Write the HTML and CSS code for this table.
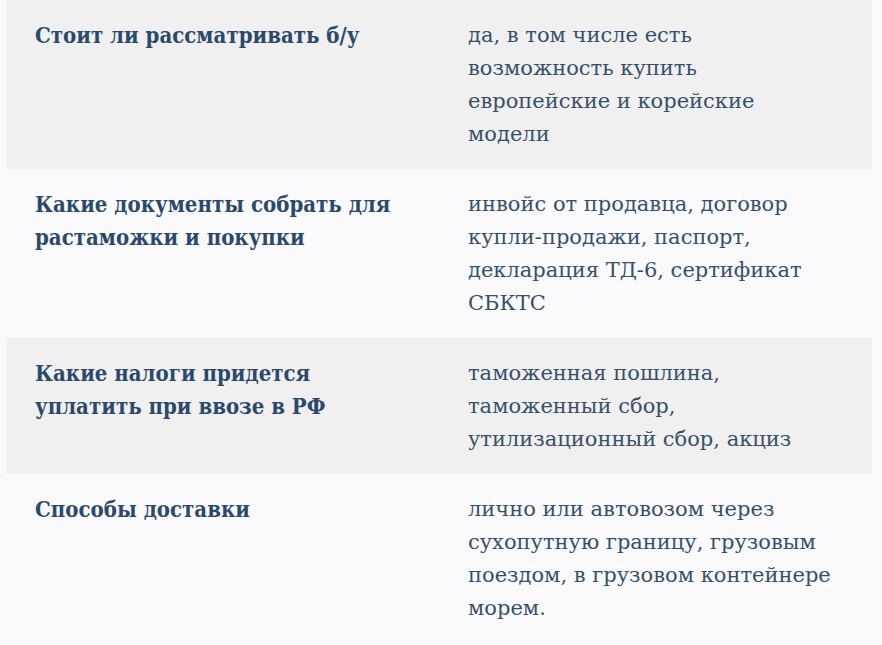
FILE: index.html
```html
<!DOCTYPE html>
<html lang="ru">
<head>
<meta charset="utf-8">
<link rel="stylesheet" href="styles.css">
</head>
<body>
<div class="table">
  <div class="row odd">
    <div class="cell key">Стоит ли рассматривать б/у</div>
    <div class="cell val">да, в том числе есть возможность купить европейские и корейские модели</div>
  </div>
  <div class="row even">
    <div class="cell key">Какие документы собрать для растаможки и покупки</div>
    <div class="cell val">инвойс от продавца, договор купли-продажи, паспорт, декларация ТД-6, сертификат СБКТС</div>
  </div>
  <div class="row odd">
    <div class="cell key">Какие налоги придется уплатить при ввозе в РФ</div>
    <div class="cell val">таможенная пошлина, таможенный сбор, утилизационный сбор, акциз</div>
  </div>
  <div class="row even">
    <div class="cell key">Способы доставки</div>
    <div class="cell val">лично или автовозом через сухопутную границу, грузовым поездом, в грузовом контейнере морем.</div>
  </div>
</div>
</body>
</html>
```

FILE: styles.css
```css
html, body {
  margin: 0;
  padding: 0;
  background: #f9f9fb;
}
body {
  padding: 0 10px 0 7px;
  font-family: "DejaVu Serif", "Liberation Serif", serif;
  color: #2e4a68;
}
.table {
  display: flex;
  flex-direction: column;
}
.row {
  display: grid;
  grid-template-columns: 433px 1fr;
}
.odd { background: #f0f0f0; }
.even { background: #fafafc; }
.cell {
  padding: 19px 34px 18px 28px;
  font-size: 21px;
  line-height: 33px;
}
.key {
  font-family: "DejaVu Serif Condensed", "DejaVu Serif", serif;
  font-stretch: condensed;
  font-size: 22px;
  font-weight: bold;
  color: #2b4a6b;
  padding-right: 38px;
}
.val {
  color: #36506b;
}
```
